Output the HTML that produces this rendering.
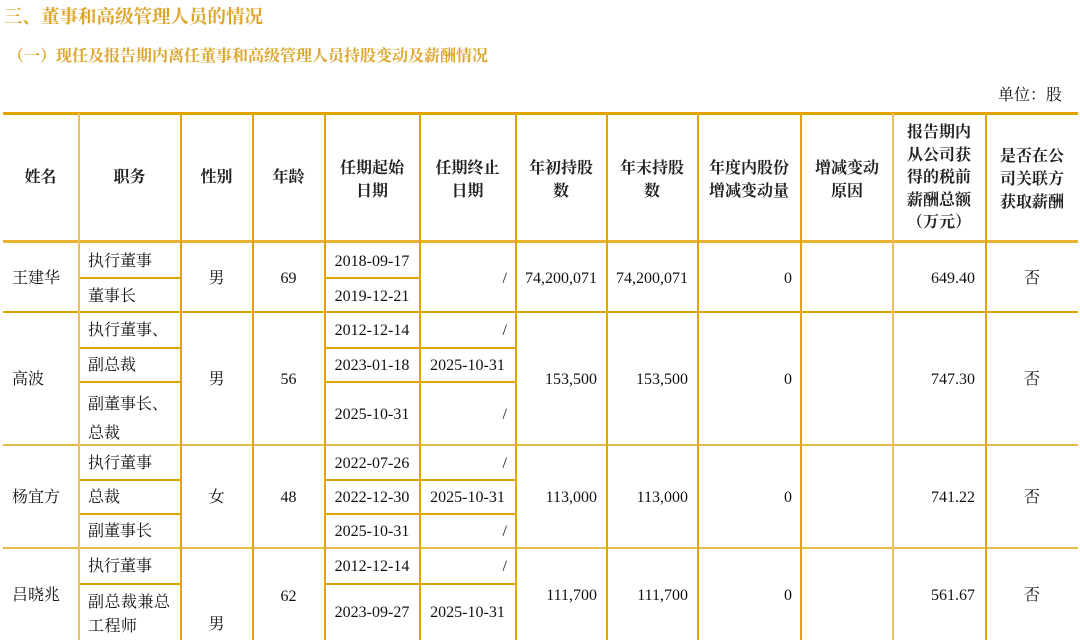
<!DOCTYPE html><html><head><meta charset="utf-8"><style>
body{margin:0;width:1080px;height:640px;overflow:hidden;background:#fff;position:relative;font-family:"Liberation Serif","Noto Serif CJK SC",serif;color:#111}
.h,.v{position:absolute;background:#e2a400}
.t{position:absolute;white-space:nowrap;font-size:16px;line-height:20px}
.c{text-align:center}.r{text-align:right}
.b{font-family:"Liberation Serif","Noto Serif CJK SC",serif;font-weight:bold;color:#222}
</style></head><body>
<div class="t b" style="left:4px;top:6px;font-size:18.5px;line-height:24px;color:#dca52a">三、董事和高级管理人员的情况</div>
<div class="t b" style="left:8px;top:47px;font-size:16px;color:#dca52a">（一）现任及报告期内离任董事和高级管理人员持股变动及薪酬情况</div>
<div class="t" style="left:998px;top:86px">单位：股</div>

<div class="h" style="left:3px;top:112px;width:1075px;height:3px"></div>
<div class="h" style="left:3px;top:240px;width:1075px;height:3px;background:#e8b330"></div>
<div class="h" style="left:3px;top:311px;width:1075px;height:2px"></div>
<div class="h" style="left:3px;top:444px;width:1075px;height:2px;background:#e8b84a"></div>
<div class="h" style="left:3px;top:547px;width:1075px;height:2px;background:#e8b84a"></div>
<div class="h" style="left:79px;top:277px;width:102px;height:1.5px"></div>
<div class="h" style="left:325px;top:277px;width:95px;height:1.5px"></div>
<div class="h" style="left:79px;top:347px;width:102px;height:1.5px"></div>
<div class="h" style="left:79px;top:381px;width:102px;height:1.5px"></div>
<div class="h" style="left:325px;top:347px;width:191px;height:1.5px"></div>
<div class="h" style="left:325px;top:381px;width:191px;height:1.5px"></div>
<div class="h" style="left:79px;top:479px;width:102px;height:1.5px"></div>
<div class="h" style="left:79px;top:513px;width:102px;height:1.5px"></div>
<div class="h" style="left:325px;top:479px;width:191px;height:1.5px"></div>
<div class="h" style="left:325px;top:513px;width:191px;height:1.5px"></div>
<div class="h" style="left:79px;top:583px;width:102px;height:1.5px"></div>
<div class="h" style="left:325px;top:583px;width:191px;height:1.5px"></div>
<div class="v" style="left:78px;top:113px;width:1.5px;height:527px;background:#ecc060"></div>
<div class="v" style="left:180px;top:113px;width:1.5px;height:527px"></div>
<div class="v" style="left:252px;top:113px;width:1.5px;height:527px"></div>
<div class="v" style="left:324px;top:113px;width:1.5px;height:527px"></div>
<div class="v" style="left:419px;top:113px;width:1.5px;height:527px"></div>
<div class="v" style="left:515px;top:113px;width:1.5px;height:527px"></div>
<div class="v" style="left:606px;top:113px;width:1.5px;height:527px"></div>
<div class="v" style="left:697px;top:113px;width:1.5px;height:527px"></div>
<div class="v" style="left:800px;top:113px;width:2px;height:527px"></div>
<div class="v" style="left:892px;top:113px;width:1.5px;height:527px;background:#ecc060"></div>
<div class="v" style="left:985px;top:113px;width:1.5px;height:527px"></div>

<div class="t b c" style="left:3px;width:75px;top:168px">姓名</div>
<div class="t b c" style="left:79px;width:101px;top:168px">职务</div>
<div class="t b c" style="left:181px;width:71px;top:168px">性别</div>
<div class="t b c" style="left:253px;width:71px;top:168px">年龄</div>
<div class="t b c" style="left:325px;width:94px;top:157px;line-height:23px">任期起始<br>日期</div>
<div class="t b c" style="left:420px;width:95px;top:157px;line-height:23px">任期终止<br>日期</div>
<div class="t b c" style="left:516px;width:90px;top:157px;line-height:23px">年初持股<br>数</div>
<div class="t b c" style="left:607px;width:90px;top:157px;line-height:23px">年末持股<br>数</div>
<div class="t b c" style="left:698px;width:102px;top:157px;line-height:23px">年度内股份<br>增减变动量</div>
<div class="t b c" style="left:802px;width:90px;top:157px;line-height:23px">增减变动<br>原因</div>
<div class="t b c" style="left:893px;width:92px;top:122px;line-height:22.5px">报告期内<br>从公司获<br>得的税前<br>薪酬总额<br>（万元）</div>
<div class="t b c" style="left:986px;width:92px;top:145px;line-height:23px">是否在公<br>司关联方<br>获取薪酬</div>

<div class="t" style="left:12px;top:269px">王建华</div>
<div class="t" style="left:88px;top:252px">执行董事</div>
<div class="t" style="left:88px;top:287px">董事长</div>
<div class="t c" style="left:181px;width:71px;top:269px">男</div>
<div class="t c" style="left:253px;width:71px;top:269px">69</div>
<div class="t c" style="left:325px;width:94px;top:252px">2018-09-17</div>
<div class="t c" style="left:325px;width:94px;top:287px">2019-12-21</div>
<div class="t r" style="left:420px;width:87px;top:269px">/</div>
<div class="t r" style="left:516px;width:81px;top:269px">74,200,071</div>
<div class="t r" style="left:607px;width:81px;top:269px">74,200,071</div>
<div class="t r" style="left:698px;width:94px;top:269px">0</div>
<div class="t r" style="left:893px;width:82px;top:269px">649.40</div>
<div class="t c" style="left:986px;width:92px;top:269px">否</div>

<div class="t" style="left:12px;top:370px">高波</div>
<div class="t" style="left:88px;top:321px">执行董事、</div>
<div class="t" style="left:88px;top:356px">副总裁</div>
<div class="t" style="left:88px;top:390px;line-height:29px">副董事长、<br>总裁</div>
<div class="t c" style="left:181px;width:71px;top:370px">男</div>
<div class="t c" style="left:253px;width:71px;top:370px">56</div>
<div class="t c" style="left:325px;width:94px;top:321px">2012-12-14</div>
<div class="t c" style="left:325px;width:94px;top:356px">2023-01-18</div>
<div class="t c" style="left:325px;width:94px;top:405px">2025-10-31</div>
<div class="t r" style="left:420px;width:87px;top:321px">/</div>
<div class="t c" style="left:420px;width:95px;top:356px">2025-10-31</div>
<div class="t r" style="left:420px;width:87px;top:405px">/</div>
<div class="t r" style="left:516px;width:81px;top:370px">153,500</div>
<div class="t r" style="left:607px;width:81px;top:370px">153,500</div>
<div class="t r" style="left:698px;width:94px;top:370px">0</div>
<div class="t r" style="left:893px;width:82px;top:370px">747.30</div>
<div class="t c" style="left:986px;width:92px;top:370px">否</div>

<div class="t" style="left:12px;top:488px">杨宜方</div>
<div class="t" style="left:88px;top:454px">执行董事</div>
<div class="t" style="left:88px;top:488px">总裁</div>
<div class="t" style="left:88px;top:522px">副董事长</div>
<div class="t c" style="left:181px;width:71px;top:488px">女</div>
<div class="t c" style="left:253px;width:71px;top:488px">48</div>
<div class="t c" style="left:325px;width:94px;top:454px">2022-07-26</div>
<div class="t c" style="left:325px;width:94px;top:488px">2022-12-30</div>
<div class="t c" style="left:325px;width:94px;top:522px">2025-10-31</div>
<div class="t r" style="left:420px;width:87px;top:454px">/</div>
<div class="t c" style="left:420px;width:95px;top:488px">2025-10-31</div>
<div class="t r" style="left:420px;width:87px;top:522px">/</div>
<div class="t r" style="left:516px;width:81px;top:488px">113,000</div>
<div class="t r" style="left:607px;width:81px;top:488px">113,000</div>
<div class="t r" style="left:698px;width:94px;top:488px">0</div>
<div class="t r" style="left:893px;width:82px;top:488px">741.22</div>
<div class="t c" style="left:986px;width:92px;top:488px">否</div>

<div class="t" style="left:12px;top:586px">吕晓兆</div>
<div class="t" style="left:88px;top:557px">执行董事</div>
<div class="t" style="left:88px;top:591px;line-height:24px;letter-spacing:0.5px">副总裁兼总<br>工程师</div>
<div class="t c" style="left:181px;width:71px;top:615px">男</div>
<div class="t c" style="left:253px;width:71px;top:587px">62</div>
<div class="t c" style="left:325px;width:94px;top:557px">2012-12-14</div>
<div class="t c" style="left:325px;width:94px;top:603px">2023-09-27</div>
<div class="t r" style="left:420px;width:87px;top:557px">/</div>
<div class="t c" style="left:420px;width:95px;top:603px">2025-10-31</div>
<div class="t r" style="left:516px;width:81px;top:586px">111,700</div>
<div class="t r" style="left:607px;width:81px;top:586px">111,700</div>
<div class="t r" style="left:698px;width:94px;top:586px">0</div>
<div class="t r" style="left:893px;width:82px;top:586px">561.67</div>
<div class="t c" style="left:986px;width:92px;top:586px">否</div>
</body></html>
